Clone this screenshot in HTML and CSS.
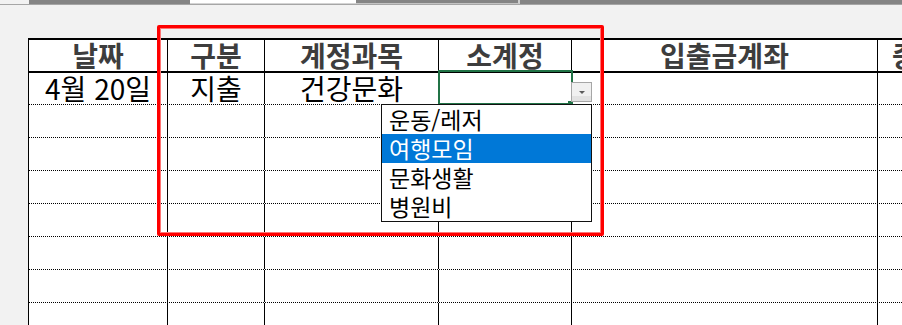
FILE: index.html
```html
<!DOCTYPE html>
<html lang="ko">
<head>
<meta charset="utf-8">
<title>소계정 드롭다운</title>
<link rel="stylesheet" href="styles.css">
</head>
<body>
<div class="tabs">
  <div class="tab tab-gap"></div>
  <div class="tab tab-a"></div>
  <div class="tab tab-active"></div>
  <div class="tab tab-b"></div>
  <div class="tab tab-rest"></div>
</div>
<div class="sheet">
  <div class="row head">
    <div class="cell">날짜</div>
    <div class="cell">구분</div>
    <div class="cell">계정과목</div>
    <div class="cell">소계정</div>
    <div class="cell">입출금계좌</div>
    <div class="cell cut">증빙</div>
  </div>
  <div class="row first">
    <div class="cell">4월 20일</div>
    <div class="cell">지출</div>
    <div class="cell">건강문화</div>
    <div class="cell"></div>
    <div class="cell"></div>
    <div class="cell"></div>
  </div>
  <div class="row"><div class="cell"></div><div class="cell"></div><div class="cell"></div><div class="cell"></div><div class="cell"></div><div class="cell"></div></div>
  <div class="row"><div class="cell"></div><div class="cell"></div><div class="cell"></div><div class="cell"></div><div class="cell"></div><div class="cell"></div></div>
  <div class="row"><div class="cell"></div><div class="cell"></div><div class="cell"></div><div class="cell"></div><div class="cell"></div><div class="cell"></div></div>
  <div class="row"><div class="cell"></div><div class="cell"></div><div class="cell"></div><div class="cell"></div><div class="cell"></div><div class="cell"></div></div>
  <div class="row"><div class="cell"></div><div class="cell"></div><div class="cell"></div><div class="cell"></div><div class="cell"></div><div class="cell"></div></div>
  <div class="row"><div class="cell"></div><div class="cell"></div><div class="cell"></div><div class="cell"></div><div class="cell"></div><div class="cell"></div></div>
  <div class="row"><div class="cell"></div><div class="cell"></div><div class="cell"></div><div class="cell"></div><div class="cell"></div><div class="cell"></div></div>

  <div class="active-cell"></div>
  <div class="fill-handle"></div>
  <div class="dd-button"><span class="dd-arrow"></span></div>
  <ul class="dd-list">
    <li class="dd-item">운동/레저</li>
    <li class="dd-item selected">여행모임</li>
    <li class="dd-item">문화생활</li>
    <li class="dd-item">병원비</li>
  </ul>
  <div class="highlight-box"></div>
</div>
</body>
</html>
```

FILE: styles.css
```css
html, body {
  margin: 0;
  padding: 0;
  overflow: hidden;
  background: #f2f2f2;
  width: 902px;
  height: 325px;
}

body {
  font-family: "Noto Sans CJK KR", "Noto Sans", sans-serif;
}

.tabs {
  display: flex;
  height: 4px;
  border-bottom: 1px solid #a6a6a6;
}

.tab { height: 4px; box-sizing: border-box; }
.tab-gap { width: 29px; background: #f2f2f2; }
.tab-a { width: 161px; background: #858585; }
.tab-active { width: 166px; background: #ffffff; border-bottom: 1px solid #d4d4d4; }
.tab-b { width: 164px; background: #858585; border-bottom: 1px solid #c4c4c4; border-right: 2px solid #d0d0d0; }
.tab-rest { flex: 1; background: #858585; }

.sheet {
  position: relative;
  margin: 33px 0 0 28px;
  border-left: 1px solid #000;
  background: #fff;
}

.row {
  display: grid;
  grid-template-columns: 139px 97px 174px 133px 306px 300px;
  height: 33px;
  box-sizing: border-box;
  border-bottom: 1px dotted #000;
}

.cell {
  box-sizing: border-box;
  border-right: 1px solid #000;
  text-align: center;
  font-size: 28px;
  line-height: 30px;
  color: #000;
  white-space: nowrap;
}

.row.head {
  height: 35px;
  border-top: 2px solid #000;
  border-bottom: 2px solid #000;
}

.row.head .cell {
  font-weight: 700;
  color: #3d3d3d;
}

.row.head .cell.cut {
  text-align: left;
  padding-left: 14px;
}

.row.first {
  height: 32px;
}

.active-cell {
  position: absolute;
  left: 409px;
  top: 32px;
  width: 135px;
  height: 35px;
  box-sizing: border-box;
  border: 2px solid #217346;
}

.fill-handle {
  position: absolute;
  left: 539px;
  top: 63px;
  width: 5px;
  height: 5px;
  background: #217346;
}

.dd-button {
  position: absolute;
  left: 542px;
  top: 44px;
  width: 21px;
  height: 20px;
  box-sizing: border-box;
  border: 1px solid #a6a6a6;
  background: linear-gradient(#f0f0f0 0, #f0f0f0 13px, #e2e2e2 13px, #e2e2e2 100%);
  display: flex;
  align-items: center;
  justify-content: center;
}

.dd-arrow {
  width: 0;
  height: 0;
  border-left: 3px solid transparent;
  border-right: 3px solid transparent;
  border-top: 3px solid #5a5a5a;
  margin-top: 1px;
}

.dd-list {
  position: absolute;
  left: 352px;
  top: 66px;
  width: 211px;
  height: 118px;
  box-sizing: border-box;
  margin: 0;
  padding: 0;
  list-style: none;
  border: 1px solid #111;
  background: #fff;
}

.dd-item {
  height: 29px;
  line-height: 28px;
  padding-left: 7px;
  font-size: 23px;
  color: #000;
  white-space: nowrap;
}

.dd-item.selected {
  background: #0078d7;
  color: #fff;
}

.highlight-box {
  position: absolute;
  left: 128px;
  top: -13px;
  width: 447px;
  height: 211px;
  box-sizing: border-box;
  border: 3px solid #ff0000;
  border-radius: 2px;
  box-shadow: inset 0 0 0 1px #ff7474;
}
```
